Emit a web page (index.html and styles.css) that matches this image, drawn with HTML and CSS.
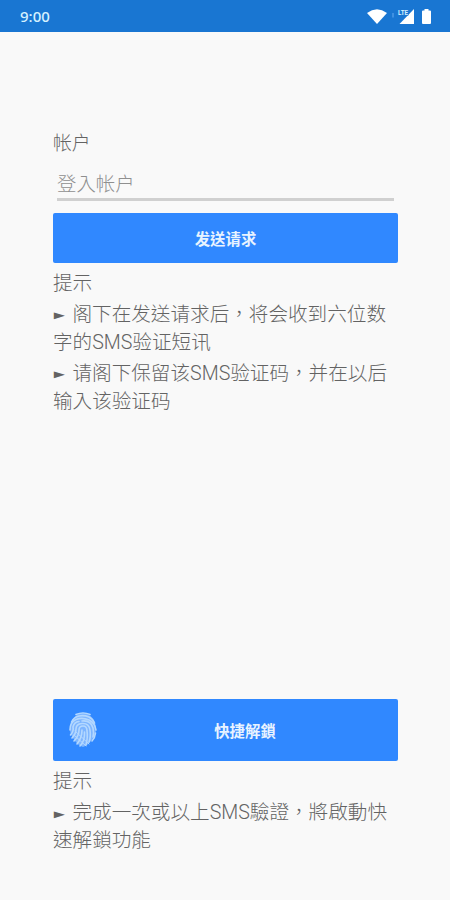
FILE: index.html
```html
<!DOCTYPE html>
<html lang="zh-Hant">
<head>
    <meta charset="UTF-8">
    <meta name="viewport" content="width=device-width, initial-scale=1.0">
    <title>登入帐户</title>

    <link rel="stylesheet" href="styles.css">
</head>
<body>
<header class="status-bar">
    <span class="clock">9:00</span>
    <div class="status-icons">
        <svg class="wifi" width="20" height="15" viewBox="0 0 20 15">
            <path d="M0 4Q10-3.400 20 4L10 15Z" fill="#fff"/>
        </svg>
        <svg class="signal" width="22" height="15" viewBox="0 0 22 15">
            <path d="M22 0V15H7.500Z" fill="#fff"/>
            <path d="M1 4V8.500" stroke="#4c9ae6" stroke-width="1.500"/>
            <text x="6" y="5.500" font-size="7" font-weight="bold" textLength="10" lengthAdjust="spacingAndGlyphs" stroke="#1976d2" stroke-width="1" paint-order="stroke" fill="#d6f0ff">LTE</text>
        </svg>
        <svg class="battery" width="9" height="15" viewBox="0 0 9 15">
            <path d="M2.500 0H6.500V1.500H8Q9 1.500 9 2.500V14Q9 15 8 15H1Q0 15 0 14V2.500Q0 1.500 1 1.500H2.500Z" fill="#fff"/>
        </svg>
    </div>
</header>

<main class="container">
    <form class="login-form">
        <label for="account">帐户</label>
        <div class="field">
            <input type="text" id="account" name="account" placeholder="登入帐户">
        </div>
        <button type="button" class="btn">发送请求</button>
        <div class="tips">
            <h2>提示</h2>
            <p><span class="arrow">►</span>阁下在发送请求后，将会收到六位数字的SMS验证短讯</p>
            <p><span class="arrow">►</span>请阁下保留该SMS验证码，并在以后输入该验证码</p>
        </div>
    </form>

    <section class="quick-unlock">
        <button type="button" class="btn btn-unlock">
            <svg class="fingerprint" width="28" height="36" viewBox="0 0 28 36" fill="none" stroke="#b4d8ff" stroke-width="1.600" stroke-linecap="round">
                <path d="M14 1.500Q23 1.500 26 11Q29 20 24 26Q20 33 14 35Q8 33 4 26Q-1 20 2 11Q5 1.500 14 1.500Z" fill="#7db5ff" stroke="none"/>
                <path d="M7 2.500Q14-.500 21 2.500"/>
                <path d="M2.500 10Q5 5 10 4T20 5Q24 7 25.500 11"/>
                <path d="M1 18Q1 10 7 7.500T20 8Q26 11 27 18"/>
                <path d="M1.500 23Q5 19 4 15Q5 10 10 9.500"/>
                <path d="M13 9Q22 8 24 16Q25 21 24 25"/>
                <path d="M3 26Q7 22 7 17Q7 12 13 11.500Q20 11 21 18T20 30"/>
                <path d="M5 29Q10 24 10 18Q10 14 14 14T18 19Q19 25 17 33"/>
                <path d="M8 32Q13 26 13 18"/>
                <path d="M11 34Q16 29 15.500 20"/>
                <path d="M26.500 21Q26 26 23 29"/>
                <path d="M6 19L20 32M5 23L17 34" stroke-width="1"/>
            </svg>
            <span class="btn-text">快捷解鎖</span>
        </button>
        <div class="tips">
            <h2>提示</h2>
            <p><span class="arrow">►</span>完成一次或以上SMS驗證，將啟動快速解鎖功能</p>
        </div>
    </section>
</main>
</body>
</html>
```
FILE: styles.css
```css
* {
    box-sizing: border-box;
}

body {
    font-family: Roboto, 'Noto Sans CJK TC', sans-serif;
    margin: 0;
    height: 900px;
    display: flex;
    flex-direction: column;
    background-color: #f9f9f9;
    color: #636363;
    font-size: 19.6px;
    font-weight: 300;
    line-height: 28px;
}

/* Status bar */
.status-bar {
    display: flex;
    justify-content: space-between;
    align-items: center;
    height: 32px;
    padding: 0 19px 0 20px;
    background-color: #1976d2;
}

.clock {
    font-family: 'Noto Sans', sans-serif;
    font-size: 15px;
    font-weight: 500;
    color: #d5f1ff;
}

.status-icons {
    display: flex;
    align-items: center;
}

.status-icons svg {
    display: block;
}

.signal {
    margin-left: 5px;
    margin-right: 8px;
}

/* Page content */
.container {
    flex: 1;
    display: flex;
    flex-direction: column;
    justify-content: space-between;
    padding: 98px 52px 45px 53px;
}

.login-form label {
    display: block;
    font-size: 18.8px;
}

.field {
    margin: 12px 4px 0;
    height: 31px;
    border-bottom: 3px solid #d0d0d0;
}

.field input {
    display: block;
    width: 100%;
    height: 29px;
    padding: 0;
    border: none;
    outline: none;
    background: none;
    font: inherit;
    font-size: 19.4px;
    color: #636363;
}

.field input::placeholder {
    color: #8f8f8f;
    opacity: 1;
}

/* Buttons */
.btn {
    display: flex;
    align-items: center;
    justify-content: center;
    width: 100%;
    height: 50px;
    margin-top: 12px;
    padding: 0;
    border: none;
    border-radius: 2px;
    background-color: #3088ff;
    color: #e8f3ff;
    font-family: Roboto, 'Noto Sans CJK TC', sans-serif;
    font-size: 15.4px;
    font-weight: 700;
}

.btn-unlock {
    height: 62px;
    margin-top: 0;
    padding-left: 16px;
}

.btn-text {
    flex: 1;
    padding-left: 12px;
    padding-right: 17px;
}

/* Tips */
.tips {
    margin-top: 7px;
}

.tips h2 {
    margin: 0;
    font-size: inherit;
    font-weight: inherit;
}

.tips p {
    margin: 3px 0 0;
}

/* wide, flat pointer */
.arrow {
    display: inline-block;
    width: 13px;
    margin-right: 6.5px;
    font-family: 'DejaVu Sans', sans-serif;
    font-size: 16px;
    line-height: 16px;
    text-indent: -1.5px;
    transform: scale(1.15, 0.7);
}
```
